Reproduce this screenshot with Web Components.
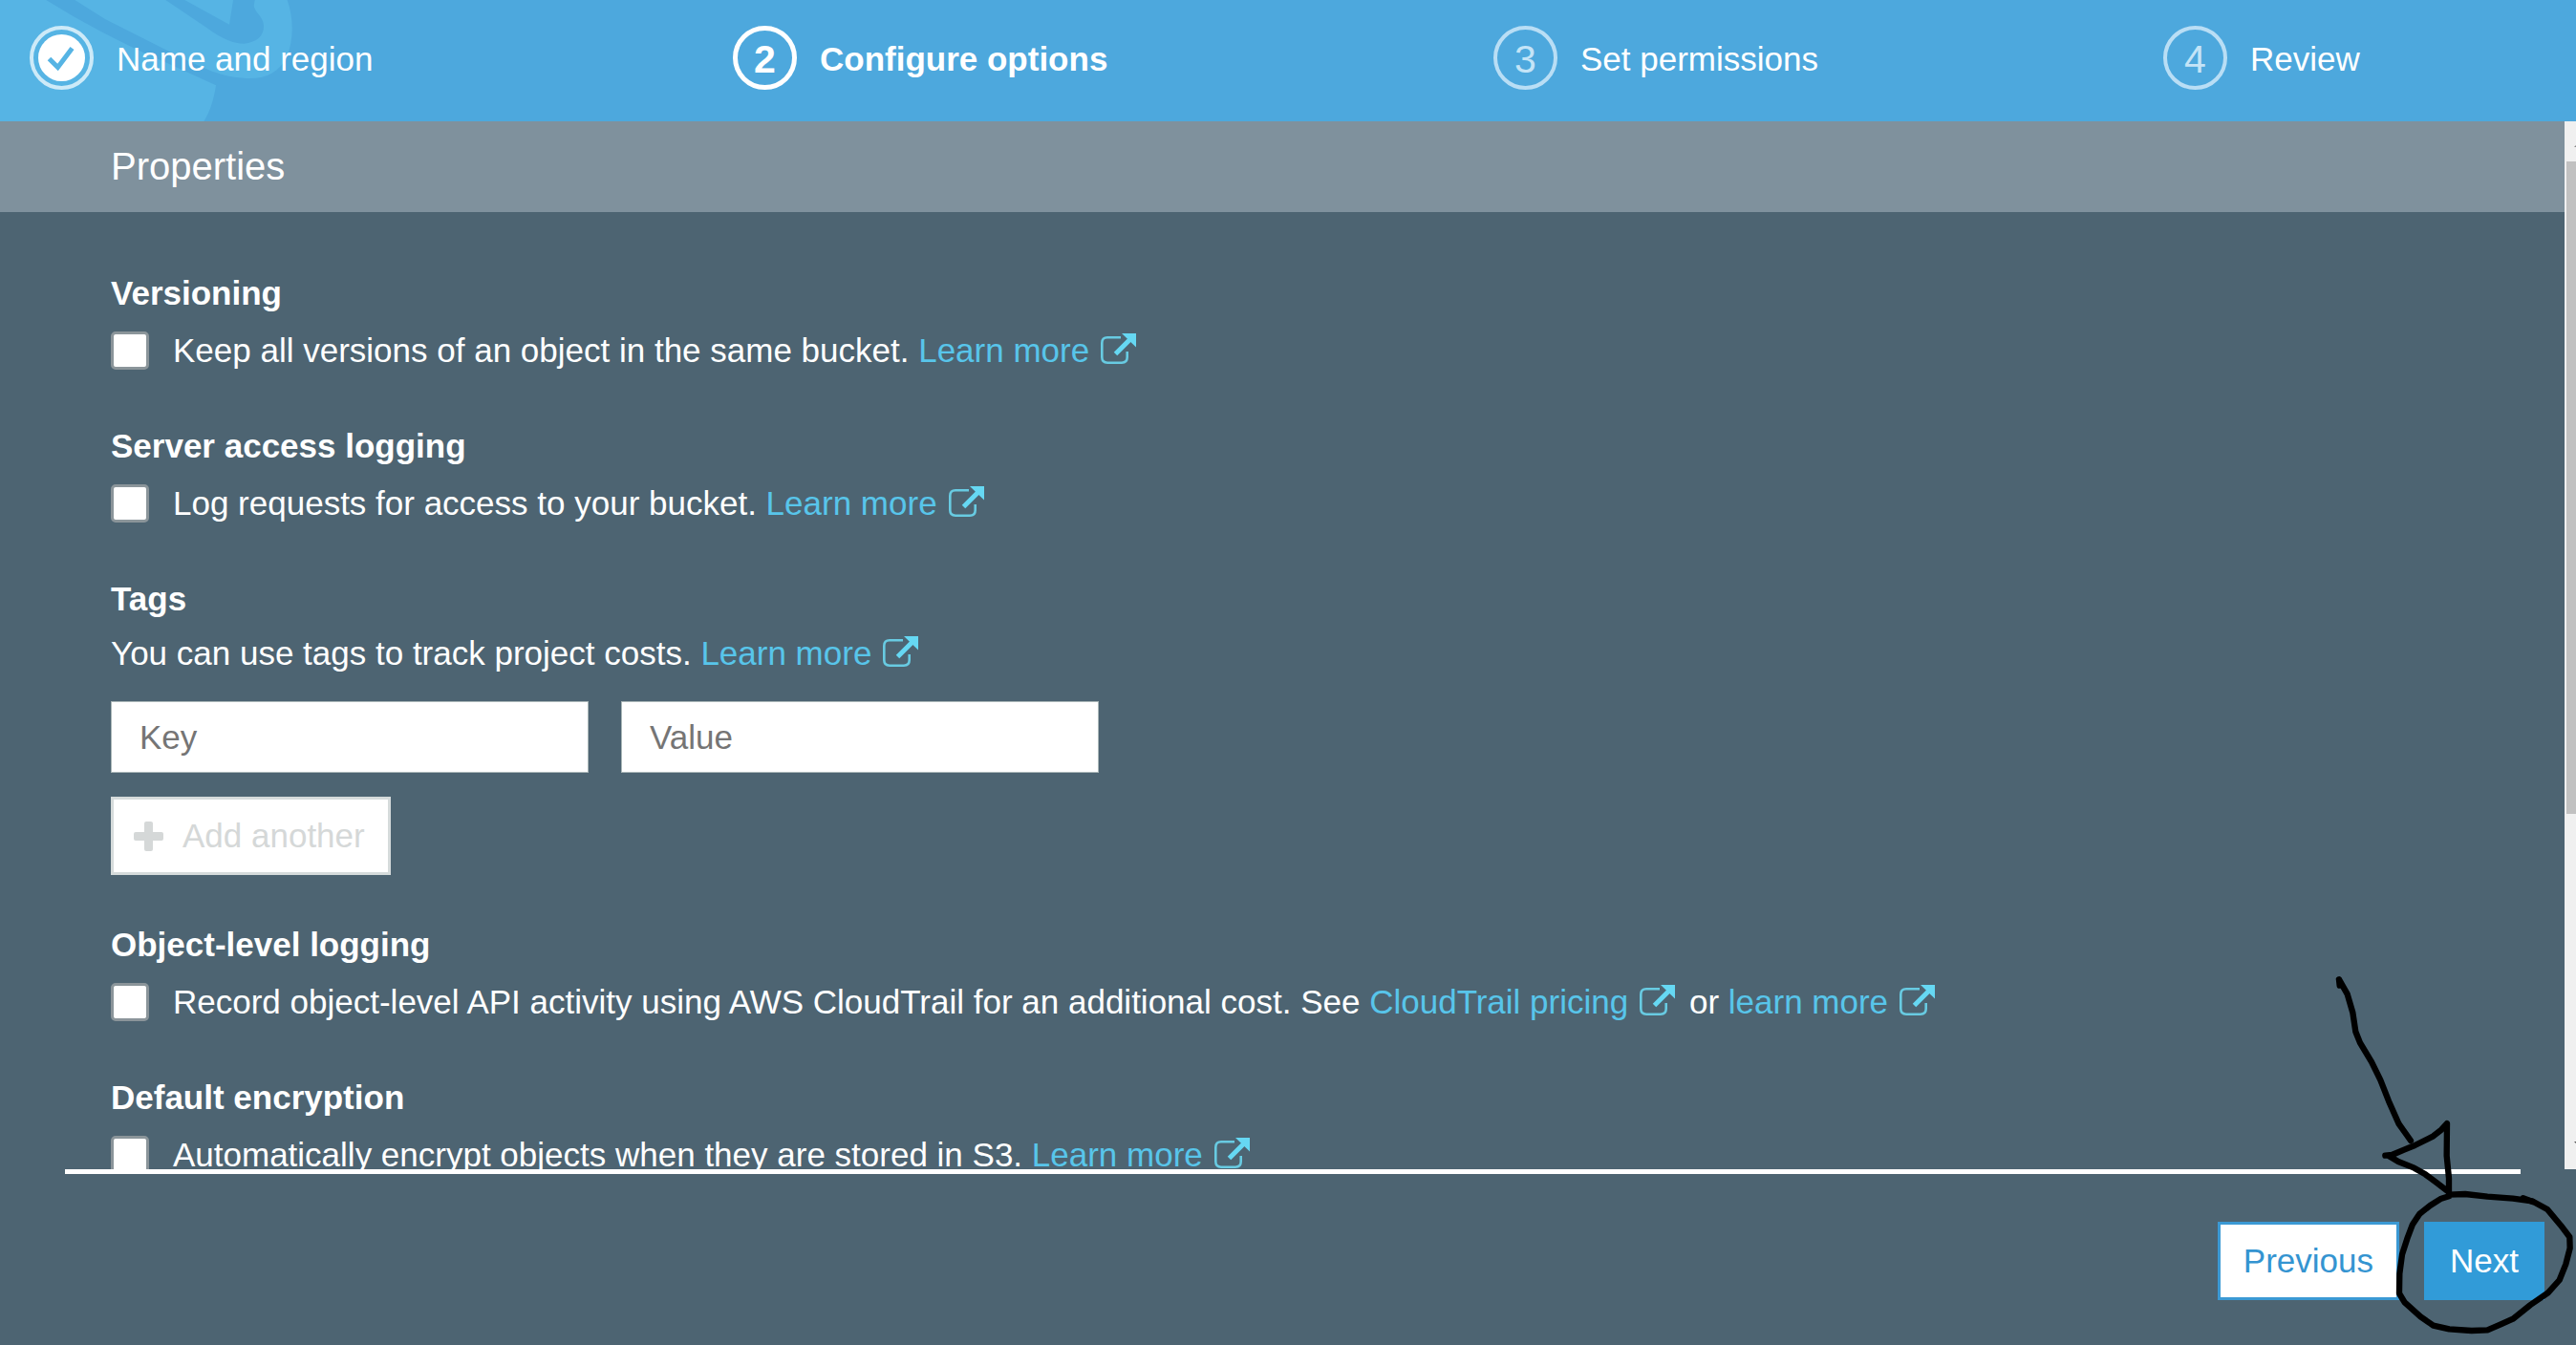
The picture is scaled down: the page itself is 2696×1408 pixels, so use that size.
<!DOCTYPE html>
<html lang="en">
<head>
<meta charset="utf-8">
<title>Create bucket</title>
<style>
  html, body { margin: 0; height: 100%; }
  body {
    font: 35px/40px "Liberation Sans", Arial, sans-serif;
    color: #fff;
    background: #4d6472;
    overflow: hidden;
  }
</style>
</head>
<body>
<bucket-wizard>
  <wizard-steps slot="steps">
    <wizard-step state="done">Name and region</wizard-step>
    <wizard-step state="current" number="2">Configure options</wizard-step>
    <wizard-step number="3">Set permissions</wizard-step>
    <wizard-step number="4">Review</wizard-step>
  </wizard-steps>

  <section-title>Properties</section-title>
  <option-group>
    <span slot="heading">Versioning</span>
    <check-option>Keep all versions of an object in the same bucket. <doc-link>Learn more</doc-link></check-option>
  </option-group>
  <option-group>
    <span slot="heading">Server access logging</span>
    <check-option>Log requests for access to your bucket. <doc-link>Learn more</doc-link></check-option>
  </option-group>
  <option-group compact>
    <span slot="heading">Tags</span>
    <tag-editor>You can use tags to track project costs. <doc-link>Learn more</doc-link></tag-editor>
  </option-group>
  <option-group>
    <span slot="heading">Object-level logging</span>
    <check-option>Record object-level API activity using AWS CloudTrail for an additional cost. See <doc-link>CloudTrail pricing</doc-link> or <doc-link>learn more</doc-link></check-option>
  </option-group>
  <option-group>
    <span slot="heading">Default encryption</span>
    <check-option>Automatically encrypt objects when they are stored in S3. <doc-link>Learn more</doc-link></check-option>
  </option-group>

  <wizard-button slot="actions">Previous</wizard-button>
  <wizard-button slot="actions" primary>Next</wizard-button>
  <pen-marks slot="marks"></pen-marks>
</bucket-wizard>

<script>
  const define = (name, html, setup) => {
    const template = document.createElement('template');
    template.innerHTML = html;
    customElements.define(name, class extends HTMLElement {
      constructor() {
        super();
        this.attachShadow({ mode: 'open' }).append(template.content.cloneNode(true));
      }
      connectedCallback() {
        if (setup) setup(this, this.shadowRoot);
      }
    });
  };

  define('bucket-wizard', `
    <style>
      :host { display: grid; grid-template-rows: auto minmax(0, 1fr) auto; height: 100vh; position: relative; overflow: hidden; }
      .body { display: flex; min-height: 0; }
      .content { flex: 1; min-width: 0; overflow: hidden; }
      footer { padding: 0 33px 47px 68px; }
      hr { margin: 0 25px 50px 0; border: 0; height: 5px; background: #fff; }
      .actions { display: flex; justify-content: flex-end; gap: 26px; }
    </style>
    <slot name="steps"></slot>
    <div class="body">
      <main class="content"><slot></slot></main>
      <scroll-rail></scroll-rail>
    </div>
    <footer>
      <hr>
      <div class="actions"><slot name="actions"></slot></div>
    </footer>
    <slot name="marks"></slot>`);

  define('scroll-rail', `
    <style>
      :host { display: flex; flex-direction: column; width: 12px; background: #f0f0f0; box-sizing: border-box; padding: 25px 0 27px 2px; }
      svg { display: block; flex: none; margin-left: auto; }
      .thumb { flex: 684; margin: 15px 0; background: #c1c1c1; }
      .rest { flex: 329; }
    </style>
    <svg width="2" height="2" viewBox="0 0 2 2"><path d="M2 0 0 2h2z" fill="#888"/></svg>
    <div class="thumb"></div>
    <div class="rest"></div>
    <svg width="2" height="2" viewBox="0 0 2 2"><path d="M2 2 0 0h2z" fill="#555"/></svg>`);

  define('wizard-steps', `
    <style>
      :host { display: block; position: relative; background: #4da8dd; overflow: hidden; }
      nav { position: relative; display: grid; grid-template-columns: 736fr 796fr 701fr 432fr; padding: 27px 0 33px 31px; }
      svg { position: absolute; left: 0; top: 0; }
    </style>
    <svg width="320" height="127" viewBox="0 0 960 381" fill="#56b4e4" aria-hidden="true">
      <path d="M0 0H145C260 72 380 135 520 196L678 268C672 310 660 350 640 381H0z"/>
      <path d="M235 0H520L650 88C700 125 735 137 765 137C810 132 830 110 828 78C824 48 800 40 797 18L800 0H902C920 50 925 120 900 180C875 225 840 247 780 246C700 244 640 215 560 176L330 60z"/>
      <path d="M580 0H732L720 77z"/>
    </svg>
    <nav aria-label="Steps"><slot></slot></nav>`);

  define('wizard-step', `
    <style>
      :host { display: flex; align-items: center; gap: 24px; white-space: nowrap; }
      :host([state=current]) { font-weight: bold; }
      .mark { box-sizing: border-box; flex: none; width: 67px; height: 67px; border-radius: 50%; border: 4px solid #b9def5; color: #c4e4f7; display: flex; align-items: center; justify-content: center; font-size: 41px; }
      :host([state=current]) .mark { border: 5px solid #fff; color: #fff; }
      :host([state=done]) .mark { border-color: #cdeaf8; }
      svg { display: none; }
      :host([state=done]) svg { display: block; }
      .number, .label { display: block; padding-top: 2px; }
      :host([state=done]) .number { display: none; }
    </style>
    <span class="mark">
      <span class="number"></span>
      <svg width="49" height="49" viewBox="0 0 49 49"><circle cx="24.5" cy="24.5" r="24.5" fill="#fff"/><path d="M11.500 25.500l9 9L35.500 14.500" fill="none" stroke="#56b4e4" stroke-width="5"/></svg>
    </span>
    <span class="label"><slot></slot></span>`, (host, root) => {
      root.querySelector('.number').textContent = host.getAttribute('number') || '';
    });

  define('section-title', `
    <style>
      :host { display: block; background: #7f919d; margin-bottom: 65px; }
      h2 { margin: 0; padding: 23px 116px 24px; font-weight: normal; font-size: 40px; line-height: 48px; }
    </style>
    <h2><slot></slot></h2>`);

  define('option-group', `
    <style>
      :host { display: block; margin: 0 116px 60px; }
      :host([compact]) { margin-bottom: 53px; }
      h3 { margin: 0 0 20px; font-size: 35px; line-height: 40px; }
      :host([compact]) h3 { margin-bottom: 17px; }
    </style>
    <h3><slot name="heading"></slot></h3>
    <slot></slot>`);

  define('check-option', `
    <style>
      :host { display: flex; align-items: flex-start; gap: 25px; }
      input { appearance: none; flex: none; box-sizing: border-box; width: 40px; height: 40px; margin: 0; background: #fff; border: 3px solid #8b959a; border-radius: 5px; }
      input:checked { background: #319bd8; }
    </style>
    <input type="checkbox" id="box">
    <label for="box"><slot></slot></label>`);

  define('doc-link', `
    <style>
      :host { display: inline; }
      a { color: #58c5ea; text-decoration: none; white-space: nowrap; }
      svg { margin: 0 5px 0 12px; vertical-align: -2px; }
    </style><a href="#"><slot></slot><svg width="37" height="32" viewBox="0 0 37 32" fill="none" aria-hidden="true"><path d="M21 4.200H7Q1.300 4.200 1.300 10V25Q1.300 30.700 7 30.700H22Q27.700 30.700 27.700 25V19" stroke="#68cbe2" stroke-width="2.600"/><path d="M15.500 21.500L31 6" stroke="#66d8f3" stroke-width="5"/><path d="M22 0H37V14.500Z" fill="#66d8f3"/></svg></a>`);

  define('tag-editor', `
    <style>
      :host { display: block; }
      .fields { display: flex; gap: 34px; margin: 30px 0 25px; }
      input { box-sizing: border-box; width: 500px; height: 75px; padding: 0 29px; border: 1px solid #aab7b8; border-radius: 0; background: #fff; color: #333; font: inherit; }
      input::placeholder { color: #757575; opacity: 1; }
      button { display: flex; align-items: center; gap: 20px; height: 82px; padding: 0 24px 0 21px; border: 3px solid #d5dbdb; background: #fff; color: #d5d8d8; font: inherit; }
    </style>
    <div><slot></slot></div>
    <div class="fields">
      <input type="text" placeholder="Key" aria-label="Key">
      <input type="text" placeholder="Value" aria-label="Value">
    </div>
    <button type="button" disabled>
      <svg width="31" height="31" viewBox="0 0 31 31" fill="#d5d8d8" aria-hidden="true"><rect x="11" width="9" height="31" rx="2"/><rect y="11" width="31" height="9" rx="2"/></svg>
      Add another
    </button>`);

  define('wizard-button', `
    <style>
      :host { display: block; }
      button { height: 82px; padding: 0 24px; border: 3px solid #3b99d4; border-radius: 0; background: #fff; color: #3494d1; font: inherit; display: block; }
      :host([primary]) button { background: #319bd8; border-color: #319bd8; color: #fff; }
    </style>
    <button type="button"><slot></slot></button>`);

  define('pen-marks', `
    <style>
      :host { position: absolute; right: 0; bottom: 0; pointer-events: none; }
      svg { display: block; }
    </style>
    <svg width="296" height="408" viewBox="0 0 888 1224" fill="none" stroke="#000" stroke-width="19" stroke-linecap="round" stroke-linejoin="round" aria-hidden="true">
      <path d="M144 76L146 95M144 76L170 122L187 180L196 240L210 275L246 335L274 392L300 458L332 530L352 558L369 582"/>
      <path d="M289 629L310 627L350 610L382 597L440 568L465 548L483 528L482 630L489 700V744L450 714L415 688L380 668L330 648L300 630"/>
      <path d="M489 752L540 750L610 758L690 764L750 772L798 798L840 848L868 885L869 920L856 970L836 1020L800 1060L745 1098L690 1142L650 1160L610 1177L560 1179L490 1174L440 1163L400 1135L350 1090L333 1062L334 1000L342 940L358 890L375 845L397 812L430 786L465 764L489 757"/>
      <path d="M722 763L752 774"/>
    </svg>`);
</script>
</body>
</html>
